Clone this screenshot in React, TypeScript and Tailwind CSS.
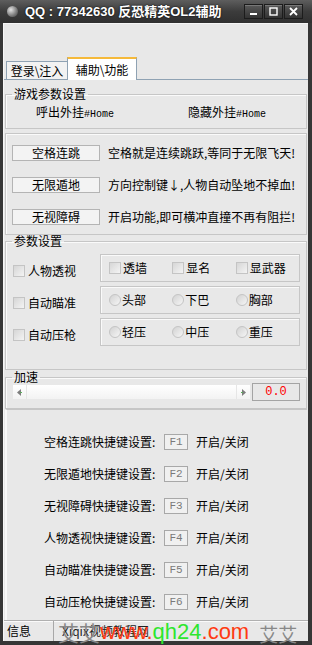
import React from "react";

const Check = () => (
  <span className="inline-block w-[12px] h-[12px] shrink-0 border border-[#c4c4c4] bg-linear-to-br from-[#d6d6d6] to-[#f4f4f4]" />
);

const Radio = () => (
  <span className="inline-block w-[12px] h-[12px] shrink-0 rounded-full border border-[#c4c4c4] bg-linear-to-br from-[#d2d2d2] to-[#f6f6f6]" />
);

const Group = ({ title, className, children }: { title: string; className?: string; children: React.ReactNode }) => (
  <fieldset className={"border border-[#c6c6c6] shadow-[inset_1px_1px_0_#fafafa] " + (className ?? "")}>
    <legend className="ml-[6px] px-[2px] text-[12px] leading-[12px]">{title}</legend>
    {children}
  </fieldset>
);

const WinBtn = ({ children }: { children: React.ReactNode }) => (
  <div className="w-[19px] h-[15px] flex items-center justify-center border border-[#1c1c1c] bg-linear-to-b from-[#5a5a5a] to-[#333] shadow-[inset_0_1px_0_#777]">
    {children}
  </div>
);

const features = [
  { btn: "空格连跳", desc: "空格就是连续跳跃,等同于无限飞天!" },
  { btn: "无限遁地", desc: "方向控制键↓,人物自动坠地不掉血!" },
  { btn: "无视障碍", desc: "开启功能,即可横冲直撞不再有阻拦!" },
];

const hotkeys = [
  { name: "空格连跳", key: "F1" },
  { name: "无限遁地", key: "F2" },
  { name: "无视障碍", key: "F3" },
  { name: "人物透视", key: "F4" },
  { name: "自动瞄准", key: "F5" },
  { name: "自动压枪", key: "F6" },
];

const Box = ({ children }: { children: React.ReactNode }) => (
  <div className="w-[200px] h-[28px] border border-[#c6c6c6] shadow-[inset_1px_1px_0_#fafafa] pl-[8px] flex items-center">
    {children}
  </div>
);

export default function App() {
  return (
    <div className="w-[312px] h-[645px] flex flex-col bg-[#363636] font-['Noto_Sans_CJK_SC',sans-serif] text-[12px] text-black overflow-hidden">
      {/* 标题栏 */}
      <div className="h-[23px] shrink-0 flex items-center bg-linear-to-b from-[#5e5e5e] via-[#3c3c3c] to-[#303030] pl-[7px] pr-[9px]">
        <span className="w-[11px] h-[11px] rounded-full bg-[radial-gradient(circle_at_35%_35%,#e4e4e4,#808080_55%,#3a3a3a)]" />
        <span className="ml-[7px] text-white font-bold text-[13px] leading-none font-['Liberation_Sans','Noto_Sans_CJK_SC',sans-serif] [text-shadow:0_0_2px_#000]">
          QQ : 77342630 反恐精英OL2辅助
        </span>
        <div className="ml-auto flex gap-[1px]">
          <WinBtn>
            <svg width="9" height="9" viewBox="0 0 9 9">
              <rect x="1" y="6" width="7" height="2" fill="#fff" />
            </svg>
          </WinBtn>
          <WinBtn>
            <svg width="9" height="9" viewBox="0 0 9 9">
              <rect x="1" y="1" width="7" height="7" fill="none" stroke="#fff" strokeWidth="1.4" />
            </svg>
          </WinBtn>
          <WinBtn>
            <svg width="9" height="9" viewBox="0 0 9 9">
              <path d="M1 1L8 8M8 1L1 8" stroke="#fff" strokeWidth="1.8" />
            </svg>
          </WinBtn>
        </div>
      </div>

      {/* 客户区 */}
      <div className="flex-1 flex flex-col ml-[3px] mr-[4px] mb-[4px] bg-[#e8e8e8] border-l border-t border-[#f6f6f6]">
        {/* 选项卡 */}
        <div className="flex items-end pt-[33px] pl-[2px] -mb-px">
          <div className="w-[62px] h-[19px] flex items-center justify-center border border-[#8fa2b3] bg-[#f2f2f2] leading-none">
            登录\注入
          </div>
          <div className="relative z-10 w-[70px] h-[23px] flex items-center justify-center border-x border-[#8fa2b3] border-t-2 border-t-[#f5b93a] bg-white leading-none -ml-px">
            辅助\功能
          </div>
        </div>

        <div className="flex-1 flex flex-col border-t border-[#8fa2b3] pl-[1px] pr-[1px]">
          {/* 游戏参数设置 */}
          <Group title="游戏参数设置" className="mt-[8px]">
            <div className="flex leading-[14px] pt-[5px] pb-[6px] pl-[30px]">
              <span className="w-[152px]">
                呼出外挂<span className="font-['Liberation_Mono',monospace] text-[10px]">#Home</span>
              </span>
              <span>
                隐藏外挂<span className="font-['Liberation_Mono',monospace] text-[10px]">#Home</span>
              </span>
            </div>
          </Group>

          {/* 功能按钮 */}
          <div className="mt-[4px] border border-[#c6c6c6] shadow-[inset_1px_1px_0_#fafafa] pt-[11px] pb-[9px] pl-[6px] flex flex-col gap-[16px]">
            {features.map((f) => (
              <div key={f.btn} className="flex items-center">
                <button className="w-[88px] h-[16px] border border-[#b4b4b4] bg-[#f3f3f3] leading-none flex items-center justify-center">
                  {f.btn}
                </button>
                <span className="ml-[8px] leading-none">{f.desc}</span>
              </div>
            ))}
          </div>

          {/* 参数设置 */}
          <Group title="参数设置">
            <div className="pt-[7px] pb-[23px] pl-[7px] flex flex-col gap-[4px]">
              <div className="flex items-center h-[28px]">
                <label className="w-[87px] mt-[5px] flex items-center gap-[3px] leading-none">
                  <Check />人物透视
                </label>
                <Box>
                  {["透墙", "显名", "显武器"].map((t) => (
                    <label key={t} className="w-[64px] flex items-center gap-[2px] leading-none">
                      <Check />{t}
                    </label>
                  ))}
                </Box>
              </div>
              <div className="flex items-center h-[28px]">
                <label className="w-[87px] mt-[5px] flex items-center gap-[3px] leading-none">
                  <Check />自动瞄准
                </label>
                <Box>
                  {["头部", "下巴", "胸部"].map((t) => (
                    <label key={t} className="w-[64px] flex items-center gap-[1px] leading-none">
                      <Radio />{t}
                    </label>
                  ))}
                </Box>
              </div>
              <div className="flex items-center h-[28px]">
                <label className="w-[87px] mt-[5px] flex items-center gap-[3px] leading-none">
                  <Check />自动压枪
                </label>
                <Box>
                  {["轻压", "中压", "重压"].map((t) => (
                    <label key={t} className="w-[64px] flex items-center gap-[1px] leading-none">
                      <Radio />{t}
                    </label>
                  ))}
                </Box>
              </div>
            </div>
          </Group>

          {/* 加速 */}
          <Group title="加速" className="mt-[1px]">
            <div className="pb-[7px] pl-[7px] flex items-center">
              <div className="w-[237px] h-[14px] flex bg-linear-to-b from-[#ffffff] to-[#f3f3f3]">
                <div className="w-[14px] flex items-center justify-center border-r border-[#e6e6e6]">
                  <svg width="5" height="7" viewBox="0 0 5 7">
                    <path d="M4 0L0 3.5L4 7Z" fill="#7d7d7d" />
                    <rect x="3" y="3" width="2" height="1" fill="#5caa5c" />
                  </svg>
                </div>
                <div className="flex-1" />
                <div className="w-[14px] flex items-center justify-center border-l border-[#e6e6e6]">
                  <svg width="5" height="7" viewBox="0 0 5 7">
                    <path d="M1 0L5 3.5L1 7Z" fill="#7d7d7d" />
                    <rect x="0" y="3" width="2" height="1" fill="#5caa5c" />
                  </svg>
                </div>
              </div>
              <div className="ml-[2px] w-[48px] h-[18px] border border-[#a4a4a4] flex items-center justify-center text-[#ff0000] font-['Liberation_Mono',monospace] text-[12px] leading-none">
                0.0
              </div>
            </div>
          </Group>

          {/* 快捷键 */}
          <div className="flex-1 border-t border-[#c6c6c6] border-l-2 border-l-[#f8f8f8] pt-[24px] pl-[37px] flex flex-col gap-[16px]">
            {hotkeys.map((h) => (
              <div key={h.key} className="flex items-center h-[16px] leading-none">
                <span className="w-[114px]">{h.name}快捷键设置:</span>
                <span className="ml-[6px] w-[24px] h-[16px] border border-[#a8a8a8] bg-[#f0f0f0] flex items-center justify-center text-[#7a7a7a] font-['Liberation_Mono',monospace] text-[11px]">
                  {h.key}
                </span>
                <span className="ml-[8px]">开启/关闭</span>
              </div>
            ))}
          </div>
        </div>

        {/* 状态栏 */}
        <div className="relative h-[21px] shrink-0 flex border-t border-[#b0b0b0] shadow-[inset_0_1px_0_#fafafa]">
          <div className="w-[50px] pl-[3px] flex items-center border-r border-[#a8a8a8] leading-none">信息</div>
          <div className="flex-1 pl-[8px] flex items-center leading-none text-[#222]">Xiqix视频教程网</div>
          <div className="absolute left-[54px] right-0 -top-[4px] flex items-end h-[26px] pointer-events-none">
            <span className="text-[21px] leading-none text-[#888]">艾艾</span>
            <span className="text-[22px] leading-none font-['Liberation_Sans',sans-serif]">
              <span className="text-[#ff3a12]">www.</span>
              <span className="text-[#2ee62e]">qh24</span>
              <span className="text-[#ff3a12]">.com</span>
            </span>
            <span className="ml-[10px] text-[19px] leading-none text-[#888]">艾艾</span>
          </div>
        </div>
      </div>
    </div>
  );
}
